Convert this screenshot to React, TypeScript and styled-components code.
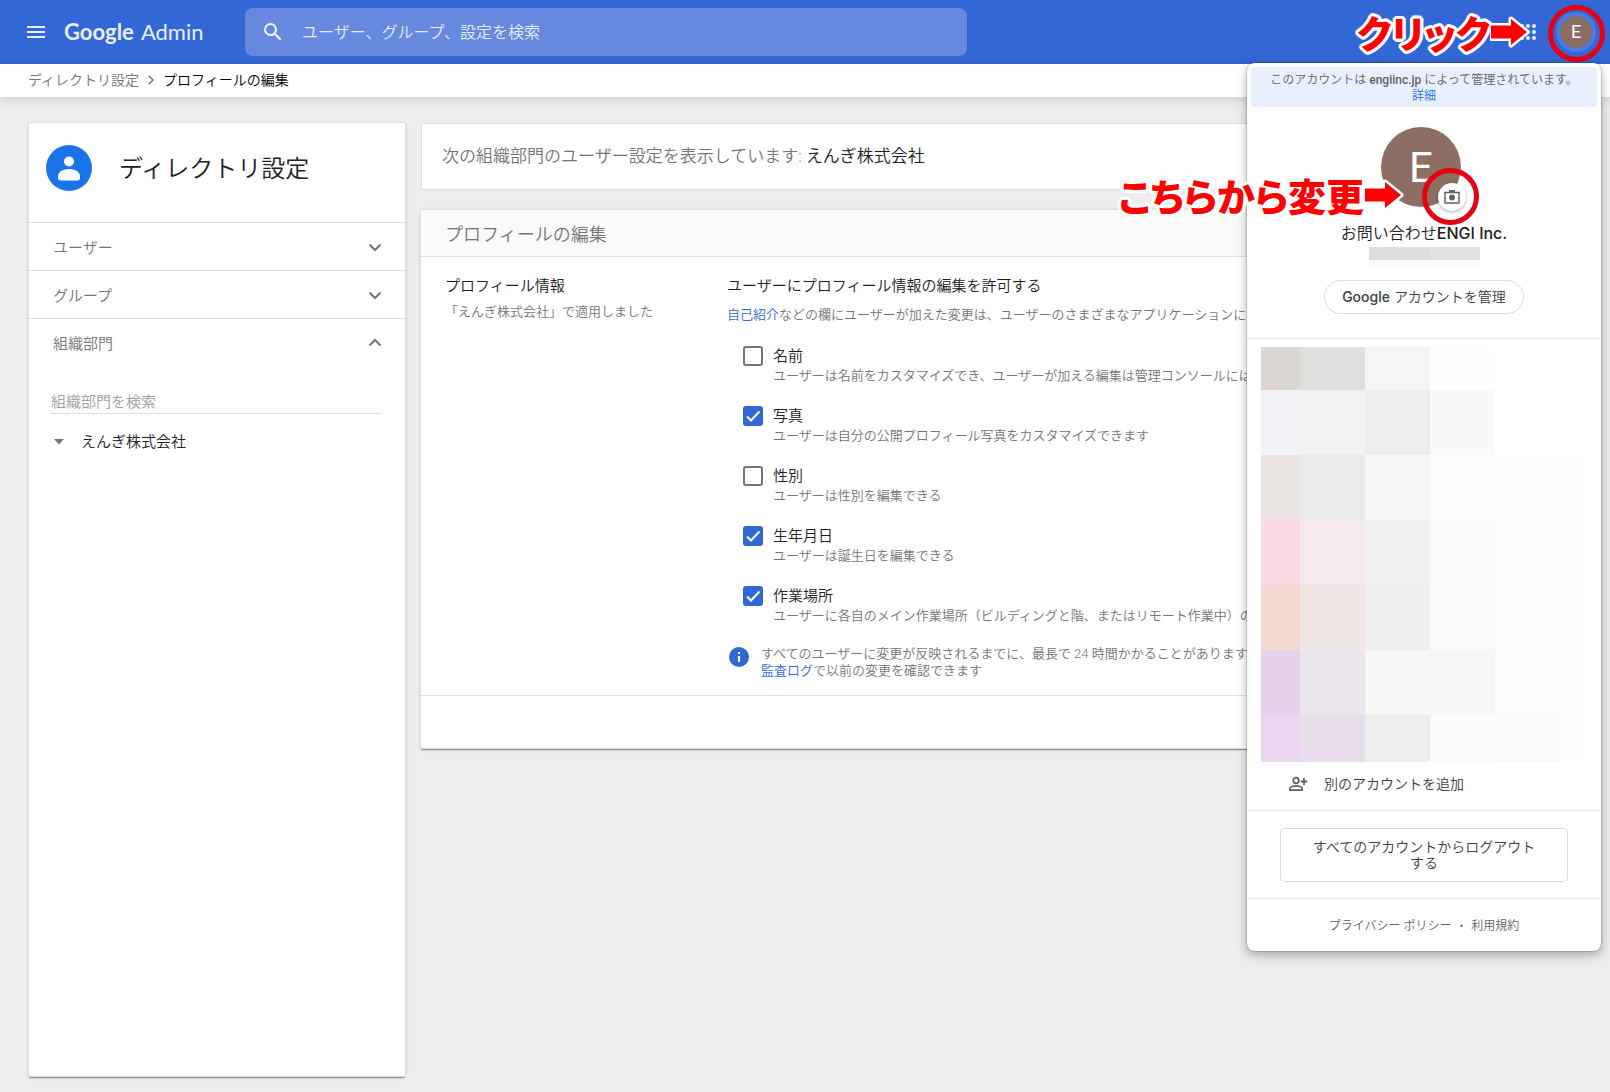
import React, { useState } from "react";
import styled, { createGlobalStyle } from "styled-components";

const uiFont = `Roboto, "Noto Sans CJK JP", sans-serif`;
const logoFont = `Lato, sans-serif`;
const brandFont = `Inter, "Noto Sans CJK JP", sans-serif`;

const GlobalStyle = createGlobalStyle`
  *, *::before, *::after { box-sizing: border-box; }
  body {
    margin: 0;
    background: #ededed;
    color: #212121;
    font-family: ${uiFont};
    font-size: 15px;
    font-weight: 350;
    line-height: 20px;
  }
  h1, h2, h3, p, ol, ul { margin: 0; padding: 0; font-weight: inherit; list-style: none; }
  button, input { font: inherit; color: inherit; }
  a { color: inherit; text-decoration: none; }
  svg { display: block; flex: none; }
`;

const Page = styled.div`
  position: relative;
  display: flex;
  flex-direction: column;
  min-height: 100vh;
  overflow: hidden;
`;

/* ---------- top bar ---------- */

const TopBar = styled.header`
  display: flex;
  align-items: center;
  height: 64px;
  padding: 0 18px 0 24px;
  background: #3367d6;
  color: #fff;
`;

const IconButton = styled.button`
  display: grid;
  place-items: center;
  width: 24px;
  height: 24px;
  padding: 0;
  border: 0;
  background: none;
  color: #fff;
`;

const Logo = styled.a`
  display: flex;
  gap: 7px;
  width: 197px;
  padding-left: 16px;
  font-family: ${logoFont};
  font-size: 22px;
  font-weight: 400;
  line-height: 32px;
  color: #e8effc;
`;

const LogoStrong = styled.span`
  font-weight: 700;
`;

const SearchBox = styled.label`
  display: flex;
  align-items: center;
  gap: 17px;
  flex: 0 1 722px;
  height: 48px;
  padding: 0 16px;
  border-radius: 8px;
  background: #6689df;
`;

const SearchInput = styled.input`
  flex: 1;
  min-width: 0;
  padding: 2px 0 0;
  border: 0;
  outline: 0;
  background: none;
  font-size: 16px;
  line-height: 24px;
  &::placeholder { color: #e6edfb; opacity: 1; }
`;

const TopActions = styled.div`
  display: flex;
  align-items: center;
  gap: 20px;
  margin-left: auto;
`;

const AvatarButton = styled.button`
  position: relative;
  width: 32px;
  height: 32px;
  padding: 0;
  border: 0;
  border-radius: 50%;
  background: #8d6e63;
  box-shadow: 0 0 0 4px #4d7ae0;
  color: #fff;
  font-size: 18px;
  font-weight: 400;
  line-height: 32px;
`;

/* ---------- breadcrumb ---------- */

const Breadcrumb = styled.nav`
  position: relative;
  display: flex;
  align-items: center;
  gap: 8px;
  height: 33px;
  padding: 0 28px 2px;
  background: #fff;
  box-shadow: 0 1px 0 #dcdcdc, 0 2px 10px rgba(0, 0, 0, 0.16);
  font-size: 14px;
  color: #757575;
`;

const Current = styled.span`
  color: #000;
`;

/* ---------- content ---------- */

const Content = styled.div`
  flex: 1;
  display: grid;
  grid-template-columns: 376px minmax(0, 1fr);
  gap: 16px;
  padding: 26px 29px 16px;
`;

const Card = styled.section`
  border-radius: 2px;
  background: #fff;
  box-shadow: 0 0 0 1px #e0e0e0, 0 2px 1px rgba(0, 0, 0, 0.38), 0 1px 4px rgba(0, 0, 0, 0.2);
`;

const SideHeader = styled.div`
  display: flex;
  align-items: center;
  gap: 27px;
  height: 99px;
  padding: 0 17px 9px;
`;

const SideTitle = styled.h1`
  padding-top: 2px;
  font-size: 24px;
  line-height: 32px;
`;

const SideRow = styled.button`
  display: flex;
  align-items: center;
  justify-content: space-between;
  width: 100%;
  height: 48px;
  padding: 0 18px 0 24px;
  border: 0;
  border-top: 1px solid #dedede;
  background: none;
  font-size: 15px;
  color: #757575;
`;

const RowLabel = styled.span`
  padding-top: 2px;
`;

const UnitSearch = styled.input`
  display: block;
  width: 330px;
  height: 24px;
  margin: 24px 23px 12px 22px;
  padding: 0;
  border: 0;
  border-bottom: 1px solid #dcdcdc;
  border-radius: 0;
  outline: 0;
  background: none;
  &::placeholder { color: #9e9e9e; opacity: 1; }
`;

const UnitRow = styled.button`
  display: flex;
  align-items: center;
  gap: 17px;
  padding: 6px 25px;
  border: 0;
  background: none;
  color: #212121;
`;

const Main = styled.main`
  display: flex;
  flex-direction: column;
  gap: 20px;
`;

const Notice = styled.p`
  padding: 21px 20px 22px;
  border: 1px solid #dedede;
  background: #fff;
  font-size: 17px;
  line-height: 22px;
  color: #757575;
`;

const Strong = styled.span`
  color: #212121;
`;

const CardHeader = styled.h2`
  padding: 14px 24px 10px;
  border-bottom: 1px solid #dedede;
  background: #fafafa;
  font-size: 18px;
  line-height: 22px;
  color: #757575;
`;

const CardBody = styled.div`
  display: grid;
  grid-template-columns: 282px minmax(0, 1fr);
  padding: 19px 0 16px 24px;
  border-bottom: 1px solid #dedede;
`;

const CardFooter = styled.div`
  height: 52px;
`;

const Heading = styled.h3`
  font-size: 15px;
  line-height: 20px;
`;

const Note = styled.p`
  font-size: 13px;
  line-height: 17px;
  color: #757575;
  white-space: nowrap;
`;

const Column = styled.div<{ $gap: number }>`
  display: flex;
  flex-direction: column;
  gap: ${(p) => p.$gap}px;
`;

const TextLink = styled.a`
  color: #3367d6;
`;

const OptionList = styled.ul`
  display: grid;
  gap: 20px;
  padding: 13px 0 9px 16px;
`;

const Option = styled.li`
  display: grid;
  grid-template-columns: 20px minmax(0, 1fr);
  column-gap: 10px;
`;

const CheckCell = styled.span`
  display: grid;
  > * { grid-area: 1 / 1; }
  svg { pointer-events: none; }
`;

const CheckInput = styled.input`
  appearance: none;
  width: 20px;
  height: 20px;
  margin: 0;
  border: 2px solid #757575;
  border-radius: 3px;
  background: #fff;
  &:checked { border-color: #3367d6; background: #3367d6; }
`;

const OptionNote = styled(Note)`
  grid-column: 2;
  line-height: 20px;
`;

const InfoRow = styled.div`
  display: flex;
  align-items: flex-start;
  gap: 12px;
  padding: 0 2px;
  svg { margin-top: 2px; }
`;

/* ---------- account panel ---------- */

const Panel = styled.aside`
  position: absolute;
  top: 63px;
  right: 9px;
  width: 354px;
  padding-top: 4px;
  border-radius: 8px;
  background: #fff;
  box-shadow: 0 0 0 1px rgba(0, 0, 0, 0.14), 0 4px 10px 1px rgba(0, 0, 0, 0.26);
`;

const Banner = styled.p`
  margin: 0 4px;
  padding: 5px 0 3px;
  border-radius: 4px;
  background: #e8f0fe;
  text-align: center;
  font-size: 12px;
  line-height: 16px;
  color: #5f6368;
`;

const Domain = styled.strong`
  font-weight: 500;
`;

const BannerLink = styled.a`
  display: block;
  color: #1a73e8;
`;

const Profile = styled.div`
  display: flex;
  flex-direction: column;
  align-items: center;
  padding: 20px 0 24px;
`;

const Portrait = styled.div`
  position: relative;
  width: 86px;
`;

const PortraitDisc = styled.div`
  width: 80px;
  height: 80px;
  border-radius: 50%;
  background: #8d6e63;
  color: #fff;
  font-size: 42px;
  font-weight: 400;
  line-height: 82px;
  text-align: center;
`;

const CameraButton = styled.button`
  position: absolute;
  right: 1px;
  bottom: -4px;
  display: grid;
  place-items: center;
  width: 28px;
  height: 28px;
  padding: 0;
  border: 0;
  border-radius: 50%;
  background: #fff;
  box-shadow: 0 1px 3px rgba(0, 0, 0, 0.35);
  color: #5f6368;
`;

const Name = styled.p`
  margin-top: 15px;
  font-family: ${brandFont};
  font-size: 16px;
  line-height: 22px;
  color: #202124;
`;

const Medium = styled.span`
  font-weight: 500;
`;

const Mosaic = styled.div<{ $columns: string; $rows: string }>`
  display: grid;
  grid-template-columns: ${(p) => p.$columns};
  grid-template-rows: ${(p) => p.$rows};
`;

const NameMosaic = styled(Mosaic)`
  margin: 3px 0 13px;
`;

const AccountMosaic = styled(Mosaic)`
  padding: 8px 0 0 14px;
`;

const Cell = styled.span<{ $fill: string }>`
  background: ${(p) => p.$fill};
`;

const ManageButton = styled.button`
  height: 34px;
  padding: 0 17px;
  border: 1px solid #dadce0;
  border-radius: 17px;
  background: #fff;
  font-family: ${brandFont};
  font-size: 14px;
  color: #3c4043;
`;

const PanelPart = styled.div`
  border-top: 1px solid #e8eaed;
`;

const AddAccount = styled.button`
  display: flex;
  align-items: center;
  gap: 16px;
  width: 100%;
  height: 48px;
  padding: 0 40px 4px;
  border: 0;
  background: none;
  font-size: 14px;
  color: #3c4043;
`;

const LogoutButton = styled.button`
  display: block;
  width: 288px;
  margin: 17px auto 16px;
  padding: 10px 28px;
  border: 1px solid #dadce0;
  border-radius: 4px;
  background: #fff;
  font-size: 14px;
  line-height: 16px;
  color: #3c4043;
`;

const PanelFooter = styled(PanelPart)`
  display: flex;
  justify-content: center;
  gap: 8px;
  padding: 19px 0 17px;
  font-size: 12px;
  line-height: 16px;
  color: #5f6368;
`;

/* ---------- call-outs laid over the screen ---------- */

const Ring = styled.span<{ $x: number; $y: number }>`
  position: absolute;
  left: ${(p) => p.$x - 28}px;
  top: ${(p) => p.$y - 28}px;
  width: 57px;
  height: 57px;
  border: 5px solid #e60012;
  border-radius: 50%;
  pointer-events: none;
`;

const Callout = styled.div<{ $top: number; $right: number }>`
  position: absolute;
  z-index: 2;
  top: ${(p) => p.$top}px;
  right: ${(p) => p.$right}px;
  display: flex;
  align-items: center;
  font-family: "Noto Sans CJK JP", sans-serif;
  font-size: 38px;
  line-height: 44px;
  font-weight: 900;
  font-feature-settings: "palt";
  white-space: nowrap;
  color: #f00;
  text-shadow: 3px 0 #fff, -3px 0 #fff, 0 3px #fff, 0 -3px #fff,
    2px 2px #fff, -2px 2px #fff, 2px -2px #fff, -2px -2px #fff,
    3px 1px #fff, -3px 1px #fff, 3px -1px #fff, -3px -1px #fff,
    1px 3px #fff, -1px 3px #fff, 1px -3px #fff, -1px -3px #fff;
`;

const Arrow = () => (
  <svg width="40" height="36" viewBox="0 0 40 36" aria-hidden="true">
    <path d="M1 11.500h20V5l16 13-16 13v-6.500H1z" fill="#f00" stroke="#fff" strokeWidth="5" strokeLinejoin="round" paintOrder="stroke" />
  </svg>
);

const Chevron = ({ up }: { up?: boolean }) => (
  <svg width="24" height="24" viewBox="0 0 24 24" fill="none" stroke="#757575" strokeWidth="2" aria-hidden="true">
    <path d={up ? "M6.5 14.5 12 9l5.5 5.5" : "M6.5 9.5 12 15l5.5-5.5"} />
  </svg>
);

const options = [
  { id: "name", label: "名前", note: "ユーザーは名前をカスタマイズでき、ユーザーが加える編集は管理コンソールには", on: false },
  { id: "photo", label: "写真", note: "ユーザーは自分の公開プロフィール写真をカスタマイズできます", on: true },
  { id: "gender", label: "性別", note: "ユーザーは性別を編集できる", on: false },
  { id: "birthday", label: "生年月日", note: "ユーザーは誕生日を編集できる", on: true },
  { id: "place", label: "作業場所", note: "ユーザーに各自のメイン作業場所（ビルディングと階、またはリモート作業中）の", on: true },
];

const accountCells = [
  "#dbd6d2", "#dfdfde", "#f5f5f5", "#fefefe", "#fff", "#fff",
  "#f3f3f7", "#f1f2f2", "#eceded", "#f9f9f9", "#fff", "#fff",
  "#eae5e2", "#ebebe9", "#f7f7f7", "#fdfdfd", "#fcfcfc", "#fdfdfd",
  "#fbd9e4", "#f5e9ed", "#f1f1f1", "#fafafa", "#fcfcfc", "#fdfdfd",
  "#f4d9d1", "#f0e7e4", "#efefef", "#fafafa", "#fcfcfc", "#fdfdfd",
  "#e3d2ea", "#ebe6ed", "#f8f8f8", "#f7f7f7", "#fcfcfc", "#fdfdfd",
  "#ead4ef", "#e8ddea", "#ededed", "#fbfbfb", "#fafafa", "#fdfdfd",
];

const nameCells = ["#dcdddf", "#e1e2e3", "#fafafc", "#f9f9f9"];

function CheckOption({ id, label, note, on }: (typeof options)[number]) {
  const [checked, setChecked] = useState(on);
  return (
    <Option>
      <CheckCell>
        <CheckInput id={id} type="checkbox" checked={checked} onChange={(e) => setChecked(e.target.checked)} />
        {checked && (
          <svg width="20" height="20" viewBox="0 0 20 20" fill="none" stroke="#fff" strokeWidth="2" aria-hidden="true">
            <path d="M4 10.5 8 14.5 16.5 5.5" />
          </svg>
        )}
      </CheckCell>
      <label htmlFor={id}>{label}</label>
      <OptionNote>{note}</OptionNote>
    </Option>
  );
}

export default function App() {
  return (
    <>
      <GlobalStyle />
      <Page>
        <TopBar>
          <IconButton aria-label="メニュー">
            <svg width="24" height="24" viewBox="0 0 24 24" fill="#e8effc">
              <path d="M3 6h18v2H3zM3 11h18v2H3zM3 16h18v2H3z" />
            </svg>
          </IconButton>
          <Logo href="#">
            <LogoStrong>Google</LogoStrong>
            <span>Admin</span>
          </Logo>
          <SearchBox>
            <svg width="24" height="24" viewBox="0 0 24 24" fill="#f1f5fd" aria-hidden="true">
              <path d="M15.5 14h-.79l-.28-.27A6.47 6.47 0 0 0 16 9.5 6.5 6.5 0 1 0 9.5 16c1.61 0 3.09-.59 4.23-1.57l.27.28v.79l5 4.99L20.49 19l-4.99-5zm-6 0C7.01 14 5 11.99 5 9.5S7.01 5 9.5 5 14 7.01 14 9.5 11.99 14 9.5 14z" />
            </svg>
            <SearchInput aria-label="検索" placeholder="ユーザー、グループ、設定を検索" />
          </SearchBox>
          <TopActions>
            <IconButton aria-label="アプリ">
              <svg width="24" height="24" viewBox="0 0 24 24" fill="#e8effc">
                {[6, 12, 18].map((y) => [6, 12, 18].map((x) => <circle key={`${x}-${y}`} cx={x} cy={y} r="2" />))}
              </svg>
            </IconButton>
            <AvatarButton aria-label="アカウント">
              E
              <Ring $x={16} $y={17} />
            </AvatarButton>
          </TopActions>
        </TopBar>

        <Breadcrumb>
          <a href="#">ディレクトリ設定</a>
          <svg width="8" height="10" viewBox="0 0 8 10" fill="none" stroke="#757575" strokeWidth="1.5" aria-hidden="true">
            <path d="M2 1l4 4-4 4" />
          </svg>
          <Current>プロフィールの編集</Current>
        </Breadcrumb>

        <Content>
          <Card>
            <SideHeader>
              <svg width="46" height="46" viewBox="0 0 46 46" aria-hidden="true">
                <circle cx="23" cy="23" r="23" fill="#1a73e8" />
                <circle cx="23" cy="16.5" r="5" fill="#fff" />
                <path d="M12 31c0-4.5 6-7 11-7s11 2.500 11 7v2c0 1.500-1 2.500-2.500 2.500h-17c-1.500 0-2.500-1-2.500-2.500z" fill="#fff" />
              </svg>
              <SideTitle>ディレクトリ設定</SideTitle>
            </SideHeader>
            <SideRow><RowLabel>ユーザー</RowLabel><Chevron /></SideRow>
            <SideRow><RowLabel>グループ</RowLabel><Chevron /></SideRow>
            <SideRow><RowLabel>組織部門</RowLabel><Chevron up /></SideRow>
            <UnitSearch aria-label="組織部門を検索" placeholder="組織部門を検索" />
            <UnitRow>
              <svg width="10" height="6" viewBox="0 0 10 6" fill="#757575" aria-hidden="true">
                <path d="M0 0h10L5 5.500z" />
              </svg>
              えんぎ株式会社
            </UnitRow>
          </Card>

          <Main>
            <Notice>
              次の組織部門のユーザー設定を表示しています: <Strong>えんぎ株式会社</Strong>
            </Notice>
            <Card>
              <CardHeader>プロフィールの編集</CardHeader>
              <CardBody>
                <Column $gap={7}>
                  <Heading>プロフィール情報</Heading>
                  <Note>「えんぎ株式会社」で適用しました</Note>
                </Column>
                <Column $gap={10}>
                  <Heading>ユーザーにプロフィール情報の編集を許可する</Heading>
                  <Note>
                    <TextLink href="#">自己紹介</TextLink>
                    などの欄にユーザーが加えた変更は、ユーザーのさまざまなアプリケーションに
                  </Note>
                  <OptionList>
                    {options.map((o) => <CheckOption key={o.id} {...o} />)}
                  </OptionList>
                  <InfoRow>
                    <svg width="20" height="20" viewBox="0 0 20 20" aria-hidden="true">
                      <circle cx="10" cy="10" r="10" fill="#3367d6" />
                      <path d="M9 5h2v2H9zM9 9h2v6H9z" fill="#fff" />
                    </svg>
                    <Note>
                      すべてのユーザーに変更が反映されるまでに、最長で 24 時間かかることがあります
                      <br />
                      <TextLink href="#">監査ログ</TextLink>で以前の変更を確認できます
                    </Note>
                  </InfoRow>
                </Column>
              </CardBody>
              <CardFooter />
            </Card>
          </Main>
        </Content>

        <Panel>
          <Banner>
            このアカウントは <Domain>engiinc.jp</Domain> によって管理されています。
            <BannerLink href="#">詳細</BannerLink>
          </Banner>
          <Profile>
            <Portrait>
              <PortraitDisc>E</PortraitDisc>
              <CameraButton aria-label="写真を変更">
                <svg width="18" height="18" viewBox="0 0 18 18" fill="none" stroke="currentColor" strokeWidth="1.500">
                  <path d="M2 4.500h14v10.500H2z" />
                  <path d="M6 3h6" strokeWidth="2" />
                  <circle cx="9" cy="9.500" r="3" fill="currentColor" stroke="none" />
                </svg>
                <Ring $x={12} $y={13} />
              </CameraButton>
            </Portrait>
            <Name>お問い合わせ<Medium>ENGI Inc.</Medium></Name>
            <NameMosaic $columns="61px 50px" $rows="13px 7px">
              {nameCells.map((fill, i) => <Cell key={i} $fill={fill} />)}
            </NameMosaic>
            <ManageButton><Medium>Google</Medium> アカウントを管理</ManageButton>
          </Profile>
          <PanelPart>
            <AccountMosaic $columns="39px repeat(4, 65px) 25px" $rows="43px repeat(5, 65px) 47px">
              {accountCells.map((fill, i) => <Cell key={i} $fill={fill} />)}
            </AccountMosaic>
            <AddAccount>
              <svg width="21" height="20" viewBox="0 0 21 20" fill="none" stroke="#5f6368" strokeWidth="1.800" aria-hidden="true">
                <circle cx="9" cy="6.500" r="2.800" />
                <path d="M2.900 16.100v-1.600c0-1.700 3.500-2.700 6.100-2.700s6.100 1 6.100 2.700v1.600zM17 4v7M13.800 7.500h6.400" />
              </svg>
              別のアカウントを追加
            </AddAccount>
          </PanelPart>
          <PanelPart>
            <LogoutButton>すべてのアカウントからログアウトする</LogoutButton>
          </PanelPart>
          <PanelFooter>
            <a href="#">プライバシー ポリシー</a>
            <span>•</span>
            <a href="#">利用規約</a>
          </PanelFooter>
        </Panel>

        <Callout $top={10} $right={80}>クリック<Arrow /></Callout>
        <Callout $top={173} $right={206}>こちらから変更<Arrow /></Callout>
      </Page>
    </>
  );
}
